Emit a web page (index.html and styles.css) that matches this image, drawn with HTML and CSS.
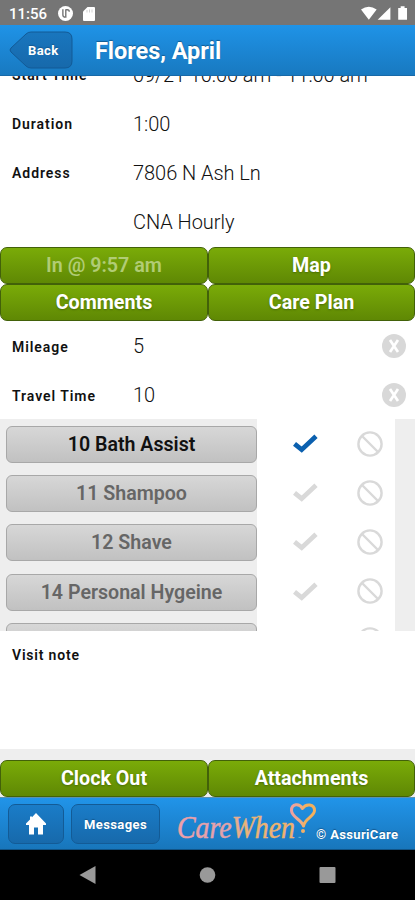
FILE: index.html
```html
<!DOCTYPE html>
<html lang="en">
<head>
<meta charset="utf-8">
<title>Flores, April</title>
<link rel="stylesheet" href="styles.css">
</head>
<body>
<svg class="defs" aria-hidden="true">
  <symbol id="check" viewBox="0 0 28 22"><path d="M2.500 11.500 L10 17.500 L25 3.500" fill="none" stroke="currentColor" stroke-width="5"/></symbol>
  <symbol id="ban" viewBox="0 0 26 26"><circle cx="13" cy="13" r="11.600" fill="none" stroke="currentColor" stroke-width="2.400"/><path d="M5 5 L21 21" stroke="currentColor" stroke-width="2.400"/></symbol>
  <symbol id="clear" viewBox="0 0 24 24"><circle cx="12" cy="12" r="12" fill="#d8d8d8"/><path d="M8 6 L16 18 M16 6 L8 18" stroke="#fff" stroke-width="2.700"/></symbol>
</svg>
<div class="screen">
  <div class="status">
    <span class="clock">11:56</span>
    <svg class="app" viewBox="0 0 16 16"><circle cx="8" cy="8" r="8" fill="#fff"/><path d="M5.200 3.500v6.200q0 2 2.300 2.300M8.300 3.500v9M8.500 4h1.500q2 0 2 2" fill="none" stroke="#757575" stroke-width="1.500"/></svg>
    <svg class="sd" viewBox="0 0 12 14"><path d="M4.500 0H11q1 0 1 1v12q0 1-1 1H1q-1 0-1-1V4.500z" fill="#fff"/><path d="M4 3v2.500M6.500 2.500v3M9 2.500v3" stroke="#c5c5c5" stroke-width=".8"/></svg>
    <svg class="signals" viewBox="0 0 48 15"><path d="M0 3.500Q8 -2.500 16 3.500L8 14z M30 1v13H17z M38 2h2.500V0h4v2H47v12h-9z" fill="#fff"/></svg>
  </div>
  <header class="header">
    <div class="back">
      <svg viewBox="0 0 64 38"><defs><linearGradient id="backfill" x2="0" y2="1"><stop stop-color="#1976be"/><stop offset="1" stop-color="#1769ab"/></linearGradient></defs><path d="M17 3Q19 1 22 1H56Q63 1 63 8V30Q63 37 56 37H22Q19 37 17 35L2 21Q0 19 2 17Z" fill="url(#backfill)" stroke="#125a96"/></svg>
      <span>Back</span>
    </div>
    <h1>Flores, April</h1>
  </header>
  <section class="details">
    <div class="field"><label>Start Time</label><span class="time">09/21 10:00 am - 11:00 am</span></div>
    <div class="field"><label>Duration</label><span>1:00</span></div>
    <div class="field"><label>Address</label><span>7806 N Ash Ln</span></div>
    <div class="field"><label></label><span>CNA Hourly</span></div>
  </section>
  <div class="actions">
    <div class="green dim">In @ 9:57 am</div><div class="green">Map</div>
    <div class="green">Comments</div><div class="green">Care Plan</div>
  </div>
  <section class="travel">
    <div class="field"><label>Mileage</label><span>5</span><svg class="clear"><use href="#clear"/></svg></div>
    <div class="field"><label>Travel Time</label><span>10</span><svg class="clear"><use href="#clear"/></svg></div>
  </section>
  <section class="tasks">
    <div class="task done"><div class="name">10 Bath Assist</div><div class="marks"><svg class="check"><use href="#check"/></svg><svg class="ban"><use href="#ban"/></svg></div></div>
    <div class="task"><div class="name">11 Shampoo</div><div class="marks"><svg class="check"><use href="#check"/></svg><svg class="ban"><use href="#ban"/></svg></div></div>
    <div class="task"><div class="name">12 Shave</div><div class="marks"><svg class="check"><use href="#check"/></svg><svg class="ban"><use href="#ban"/></svg></div></div>
    <div class="task"><div class="name">14 Personal Hygeine</div><div class="marks"><svg class="check"><use href="#check"/></svg><svg class="ban"><use href="#ban"/></svg></div></div>
    <div class="task"><div class="name"></div><div class="marks"><svg class="check"><use href="#check"/></svg><svg class="ban"><use href="#ban"/></svg></div></div>
  </section>
  <section class="note"><label>Visit note</label></section>
  <div class="actions bottom"><div class="green">Clock Out</div><div class="green">Attachments</div></div>
  <footer class="footer">
    <div class="tab home"><svg viewBox="0 0 20 22"><path d="M10 0 L20 10.500 V12 H17 V21.500 H12 V14.500 H8 V21.500 H3 V12 H0 V10.500 L4 6.400 V3.500 H6 V4.300Z" fill="#fff"/></svg></div>
    <div class="tab messages">Messages</div>
    <svg class="logo" viewBox="0 0 142 50">
      <defs><linearGradient id="brand" gradientUnits="userSpaceOnUse" x1="0" x2="126"><stop stop-color="#f0a0a8"/><stop offset=".4" stop-color="#e2a2aa"/><stop offset=".55" stop-color="#eab478"/><stop offset="1" stop-color="#f2b069"/></linearGradient>
      <linearGradient id="heart" gradientUnits="userSpaceOnUse" x1="114" x2="140"><stop stop-color="#ec9ea6"/><stop offset=".4" stop-color="#eeab88"/><stop offset=".6" stop-color="#f3b05e"/></linearGradient></defs>
      <text class="brand" x="1" y="40" textLength="118" lengthAdjust="spacingAndGlyphs" fill="url(#brand)" stroke="url(#brand)">CareWhen</text>
      <path d="M127.500 28C126 22 115.500 19 115.500 12.500C115.500 5.500 123.500 5 126.500 10.500C130 5 138.500 6 138.500 12.500C138.500 18.500 129 20 127.500 28" fill="none" stroke="url(#heart)" stroke-width="3" stroke-linecap="round" stroke-linejoin="round"/>
      <circle cx="127" cy="33" r="2" fill="#f2b069"/>
      <text class="tm" x="122" y="42">™</text>
    </svg>
    <span class="copyright">© AssuriCare</span>
  </footer>
  <nav class="nav">
    <svg viewBox="0 0 16 18"><path d="M0 9L16 0V18Z" fill="#999"/></svg>
    <svg viewBox="0 0 16 18"><circle cx="8" cy="9" r="7.800" fill="#999"/></svg>
    <svg viewBox="0 0 16 18"><rect y="1" width="16" height="16" rx="1" fill="#999"/></svg>
  </nav>
</div>
</body>
</html>
```
FILE: styles.css
```css
* { box-sizing: border-box; }
body { margin: 0; font-family: Roboto, sans-serif; color: #111; background: #000; }
svg { display: block; flex: none; }
.defs { position: absolute; width: 0; height: 0; }
.screen { width: 415px; height: 900px; display: flex; flex-direction: column; overflow: hidden; background: #eee; }
.screen > * { flex: none; }

.status { height: 25px; display: flex; align-items: center; background: #757575; color: #fff; padding: 2px 7px 0 9px; }
.clock { width: 49px; font-size: 15px; font-weight: 500; }
.app { width: 15px; height: 15px; }
.sd { width: 12px; height: 14px; margin-left: 10px; }
.signals { width: 47px; height: 15px; margin-left: auto; }

.header { height: 51px; display: flex; align-items: center; padding-left: 9px; background: linear-gradient(#1f93e7, #1879c0); border-bottom: 1px solid #1769a8; color: #fff; }
.back { width: 64px; height: 38px; display: grid; align-items: center; }
.back > * { grid-area: 1 / 1; }
.back svg { width: 64px; height: 38px; }
.back span { padding-left: 19px; font-size: 13px; font-weight: 700; letter-spacing: .4px; text-shadow: 0 -1px 1px #145a91; }
h1 { margin: 2px 0 0 22px; font-size: 23.500px; line-height: 30px; font-weight: 700; letter-spacing: -.05px; text-shadow: 0 -1px 1px #125a91; }

.details { height: 171px; display: flex; flex-direction: column; justify-content: flex-end; overflow: hidden; padding-bottom: 1px; background: #fff; }
.field { height: 49px; flex: none; display: flex; align-items: center; padding: 0 9px 0 12px; }
label { width: 121px; font-size: 14px; font-weight: 600; letter-spacing: .95px; }
.details label, .travel label { margin-top: 1px; }
.field span { font-size: 20px; font-weight: 300; letter-spacing: -.05px; color: #111; }
.field .time { letter-spacing: -.07px; }
.field .clear { width: 24px; height: 24px; margin-left: auto; }

.actions { display: grid; grid-template-columns: 208px 207px; grid-auto-rows: 37.400px; background: #fff; }
.green { height: 37px; display: flex; align-items: center; justify-content: center; border: 1px solid #426109; border-radius: 7px; background: linear-gradient(#7aab08, #5f8804); color: #fff; font-size: 19.700px; font-weight: 700; text-shadow: 0 1px 2px #35540099; }
.dim { color: #b1cc75; text-shadow: none; font-weight: 600; }
.travel { height: 97.700px; background: #fff; }

.tasks { height: 211.500px; overflow: hidden; background: #eee; }
.task { height: 49.200px; display: flex; color: #d9d9d9; }
.name { width: 251px; height: 37px; margin: 6.600px 0 0 6px; display: flex; align-items: center; justify-content: center; border: 1px solid #a8a8a8; border-radius: 6px; background: linear-gradient(#d7d7d7, #c1c1c1); color: #666; font-size: 19.600px; font-weight: 600; }
.done .name { color: #111; }
.marks { width: 138px; display: flex; align-items: center; padding: 0 12px 1px 35px; background: #fff; }
.check { width: 27px; height: 21px; }
.done .check { color: #0b60af; }
.ban { width: 26px; height: 26px; margin-left: auto; }

.note { height: 118px; padding: 15.500px 12px; background: #fff; line-height: 18px; }
.note label { letter-spacing: .8px; }
.bottom { height: 48px; padding-top: 11px; background: #eee; }

.footer { height: 53px; display: flex; align-items: center; padding-left: 8px; background: linear-gradient(#2194e9, #1876bb); border-top: 1px solid #5b91af; border-bottom: 1px solid #115487; color: #fff; }
.tab { height: 40px; margin-top: 2px; display: flex; align-items: center; justify-content: center; border: 1px solid #135b96; border-radius: 7px; background: linear-gradient(#1a7cc8, #1769ab); font-size: 13px; font-weight: 700; text-shadow: 0 -1px 1px #145a91; }
.home { width: 56px; }
.home svg { width: 20px; height: 22px; }
.messages { width: 89px; margin-left: 7px; letter-spacing: .4px; }
.logo { width: 142px; height: 50px; margin-left: 16px; }
.brand { font-family: "Z003", "URW Chancery L", "Liberation Serif", serif; font-style: italic; font-size: 32px; stroke-width: .5px; }
.tm { font: 5px Roboto, sans-serif; fill: #c8d8e0; }
.copyright { margin: 23px 0 0 -2px; font-size: 13px; font-weight: 700; letter-spacing: .35px; white-space: nowrap; text-shadow: 0 -1px 1px #145a91; }

.nav { height: 50px; display: flex; align-items: center; justify-content: center; gap: 103px; background: #000; }
.nav svg { width: 17px; height: 18px; }
```
